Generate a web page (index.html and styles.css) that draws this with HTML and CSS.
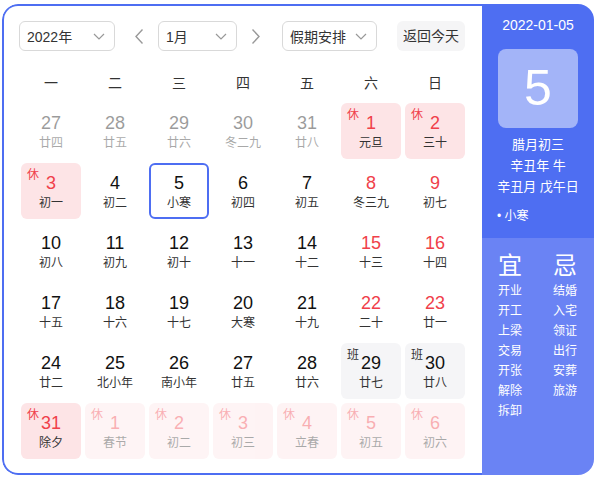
FILE: index.html
```html
<!DOCTYPE html>
<html lang="zh-CN">
<head>
<meta charset="utf-8">
<link rel="stylesheet" href="styles.css">
</head>
<body>
<div class="cal">
  <div class="main">
    <div class="toolbar">
      <div class="select sel-year"><span>2022年</span><svg class="chev" viewBox="0 0 12 7" width="12" height="7"><path d="M1 1l5 5 5-5" fill="none" stroke="#999" stroke-width="1.2"/></svg></div>
      <svg class="arrow arrow-prev" viewBox="0 0 8 15" width="8" height="15"><path d="M7.5 0.5L1 7.5l6.5 7" fill="none" stroke="#999" stroke-width="1.4"/></svg>
      <div class="select sel-month"><span>1月</span><svg class="chev" viewBox="0 0 12 7" width="12" height="7"><path d="M1 1l5 5 5-5" fill="none" stroke="#999" stroke-width="1.2"/></svg></div>
      <svg class="arrow arrow-next" viewBox="0 0 8 15" width="8" height="15"><path d="M0.5 0.5L7 7.5l-6.5 7" fill="none" stroke="#999" stroke-width="1.4"/></svg>
      <div class="select sel-holiday"><span>假期安排</span><svg class="chev" viewBox="0 0 12 7" width="12" height="7"><path d="M1 1l5 5 5-5" fill="none" stroke="#999" stroke-width="1.2"/></svg></div>
      <div class="today-btn">返回今天</div>
    </div>
    <div class="weekdays">
      <span>一</span><span>二</span><span>三</span><span>四</span><span>五</span><span>六</span><span>日</span>
    </div>
    <div class="grid">
      <div class="cell other"><div class="num">27</div><div class="lunar">廿四</div></div>
      <div class="cell other"><div class="num">28</div><div class="lunar">廿五</div></div>
      <div class="cell other"><div class="num">29</div><div class="lunar">廿六</div></div>
      <div class="cell other"><div class="num">30</div><div class="lunar">冬二九</div></div>
      <div class="cell other"><div class="num">31</div><div class="lunar">廿八</div></div>
      <div class="cell rest"><span class="tag">休</span><div class="num">1</div><div class="lunar">元旦</div></div>
      <div class="cell rest"><span class="tag">休</span><div class="num">2</div><div class="lunar">三十</div></div>

      <div class="cell rest"><span class="tag">休</span><div class="num">3</div><div class="lunar">初一</div></div>
      <div class="cell"><div class="num">4</div><div class="lunar">初二</div></div>
      <div class="cell selected"><div class="num">5</div><div class="lunar">小寒</div></div>
      <div class="cell"><div class="num">6</div><div class="lunar">初四</div></div>
      <div class="cell"><div class="num">7</div><div class="lunar">初五</div></div>
      <div class="cell weekend"><div class="num">8</div><div class="lunar">冬三九</div></div>
      <div class="cell weekend"><div class="num">9</div><div class="lunar">初七</div></div>

      <div class="cell"><div class="num">10</div><div class="lunar">初八</div></div>
      <div class="cell"><div class="num">11</div><div class="lunar">初九</div></div>
      <div class="cell"><div class="num">12</div><div class="lunar">初十</div></div>
      <div class="cell"><div class="num">13</div><div class="lunar">十一</div></div>
      <div class="cell"><div class="num">14</div><div class="lunar">十二</div></div>
      <div class="cell weekend"><div class="num">15</div><div class="lunar">十三</div></div>
      <div class="cell weekend"><div class="num">16</div><div class="lunar">十四</div></div>

      <div class="cell"><div class="num">17</div><div class="lunar">十五</div></div>
      <div class="cell"><div class="num">18</div><div class="lunar">十六</div></div>
      <div class="cell"><div class="num">19</div><div class="lunar">十七</div></div>
      <div class="cell"><div class="num">20</div><div class="lunar">大寒</div></div>
      <div class="cell"><div class="num">21</div><div class="lunar">十九</div></div>
      <div class="cell weekend"><div class="num">22</div><div class="lunar">二十</div></div>
      <div class="cell weekend"><div class="num">23</div><div class="lunar">廿一</div></div>

      <div class="cell"><div class="num">24</div><div class="lunar">廿二</div></div>
      <div class="cell"><div class="num">25</div><div class="lunar">北小年</div></div>
      <div class="cell"><div class="num">26</div><div class="lunar">南小年</div></div>
      <div class="cell"><div class="num">27</div><div class="lunar">廿五</div></div>
      <div class="cell"><div class="num">28</div><div class="lunar">廿六</div></div>
      <div class="cell work"><span class="tag">班</span><div class="num">29</div><div class="lunar">廿七</div></div>
      <div class="cell work"><span class="tag">班</span><div class="num">30</div><div class="lunar">廿八</div></div>

      <div class="cell rest"><span class="tag">休</span><div class="num">31</div><div class="lunar">除夕</div></div>
      <div class="cell rest other"><span class="tag">休</span><div class="num">1</div><div class="lunar">春节</div></div>
      <div class="cell rest other"><span class="tag">休</span><div class="num">2</div><div class="lunar">初二</div></div>
      <div class="cell rest other"><span class="tag">休</span><div class="num">3</div><div class="lunar">初三</div></div>
      <div class="cell rest other"><span class="tag">休</span><div class="num">4</div><div class="lunar">立春</div></div>
      <div class="cell rest other"><span class="tag">休</span><div class="num">5</div><div class="lunar">初五</div></div>
      <div class="cell rest other"><span class="tag">休</span><div class="num">6</div><div class="lunar">初六</div></div>
    </div>
  </div>
  <div class="side">
    <div class="side-top">
      <div class="side-date">2022-01-05</div>
      <div class="big-day">5</div>
      <div class="side-lunar">
        <div>腊月初三</div>
        <div>辛丑年 牛</div>
        <div>辛丑月 戊午日</div>
      </div>
      <div class="side-term">• 小寒</div>
    </div>
    <div class="side-bottom">
      <div class="yiji">
        <div class="yj-col">
          <div class="yj-title">宜</div>
          <div>开业</div><div>开工</div><div>上梁</div><div>交易</div><div>开张</div><div>解除</div><div>拆卸</div>
        </div>
        <div class="yj-col">
          <div class="yj-title">忌</div>
          <div>结婚</div><div>入宅</div><div>领证</div><div>出行</div><div>安葬</div><div>旅游</div>
        </div>
      </div>
    </div>
  </div>
</div>
</body>
</html>
```
FILE: styles.css
```css
html, body {
  margin: 0;
  padding: 0;
  background: #fff;
}
body {
  font-family: "Liberation Sans", "Noto Sans CJK SC", sans-serif;
  color: #333;
}
.cal {
  display: flex;
  margin: 4px 0 0 2px;
  width: 592px;
  height: 471px;
  border-radius: 16px;
  overflow: hidden;
}
.main {
  width: 480px;
  box-sizing: border-box;
  border: 2px solid #4e6ef2;
  border-right: none;
  border-radius: 16px 0 0 16px;
  padding: 15px 17px 0 15px;
  background: #fff;
}
.toolbar {
  display: flex;
  align-items: center;
  height: 30px;
}
.select {
  box-sizing: border-box;
  height: 30px;
  border: 1px solid #d9d9d9;
  border-radius: 6px;
  display: flex;
  align-items: center;
  justify-content: space-between;
  padding: 0 9px 0 7px;
  font-size: 14px;
  color: #333;
}
.sel-year { width: 96px; }
.sel-month { width: 79px; }
.sel-holiday { width: 95px; }
.chev { display: block; }
.arrow { display: block; }
.arrow-prev { margin: 0 15px 0 20px; }
.arrow-next { margin: 0 22px 0 15px; }
.today-btn {
  margin-left: auto;
  width: 68px;
  height: 30px;
  line-height: 30px;
  text-align: center;
  font-size: 14px;
  background: #f5f5f6;
  border-radius: 6px;
  color: #333;
}
.weekdays {
  display: grid;
  grid-template-columns: repeat(7, 60px);
  column-gap: 4px;
  margin: 22px 0 10px 2px;
  height: 20px;
  line-height: 20px;
  font-size: 14px;
  text-align: center;
  color: #333;
}
.grid {
  display: grid;
  grid-template-columns: repeat(7, 60px);
  grid-auto-rows: 56px;
  column-gap: 4px;
  row-gap: 4px;
  margin-left: 2px;
}
.cell {
  position: relative;
  box-sizing: border-box;
  border-radius: 6px;
  text-align: center;
  padding-top: 10px;
}
.num {
  font-size: 18px;
  line-height: 20px;
  color: #111;
}
.lunar {
  font-size: 12px;
  line-height: 16px;
  margin-top: 2px;
  color: #333;
}
.tag {
  position: absolute;
  left: 6px;
  top: 5px;
  font-size: 12px;
  line-height: 14px;
}
.rest { background: #fde4e6; }
.rest .num, .weekend .num { color: #f0404a; }
.rest .tag { color: #f0404a; }
.work { background: #f5f5f7; }
.work .tag { color: #333; }
.other { opacity: 0.42; }
.selected {
  border: 2px solid #4e6ef2;
  padding-top: 8px;
}
.side {
  width: 112px;
  display: flex;
  flex-direction: column;
  color: #fff;
}
.side-top {
  background: #4e6ef2;
  height: 234px;
  padding-top: 11px;
  box-sizing: border-box;
  text-align: center;
}
.side-date {
  font-size: 14px;
  line-height: 20px;
}
.big-day {
  width: 80px;
  height: 79px;
  margin: 14px auto 0;
  border-radius: 8px;
  background: #a3b4f8;
  font-size: 50px;
  line-height: 79px;
  color: #fff;
}
.side-lunar {
  margin-top: 6px;
  font-size: 13px;
  line-height: 21px;
}
.side-term {
  text-align: left;
  padding-left: 15px;
  margin-top: 10px;
  font-size: 12px;
  line-height: 18px;
}
.side-bottom {
  flex: 1;
  background: #6a83f4;
  padding: 14px 0 0 16px;
}
.yiji {
  display: grid;
  grid-template-columns: 55px 40px;
}
.yj-col {
  font-size: 12px;
  line-height: 20px;
}
.yj-title {
  font-size: 24px;
  line-height: 28px;
  margin-bottom: 1px;
}
```
